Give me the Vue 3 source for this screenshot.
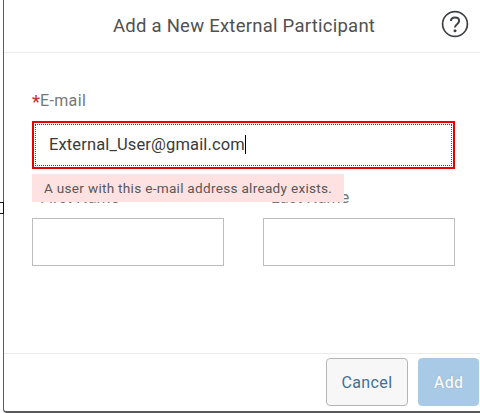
<script setup>
import { ref } from 'vue'

const email = ref('External_User@gmail.com')
const names = ['First Name', 'Last Name']
</script>

<template>
  <main class="page">
    <span class="handle"></span>
    <section class="dialog">
      <header class="header">
        <h1 class="title">Add a New External Participant</h1>
        <svg class="help" viewBox="0 0 28 28" fill="none" stroke="#3f4245">
          <circle cx="14" cy="14" r="12.4" stroke-width="1.7" />
          <path d="M9.9 11C10 8.7 11.5 7.4 14 7.4c2.5 0 4.1 1.3 4.1 3.4 0 1.7-1 2.5-2.1 3.4-1.3 1-2 1.6-2 3.3" stroke-width="2" />
          <circle cx="14" cy="20.8" r="1.5" fill="#3f4245" stroke="none" />
        </svg>
      </header>
      <div class="body">
        <label class="label"><span class="star">*</span><span class="email-label">E-mail</span></label>
        <div class="input invalid">
          <div class="focus"><span class="value">{{ email }}</span><i class="caret"></i></div>
        </div>
        <div class="names">
          <div v-for="name in names" :key="name" class="field">
            <label class="name-label"><span>{{ name }}</span></label>
            <div class="input"></div>
          </div>
          <div class="message"><span>A user with this e-mail address already exists.</span></div>
        </div>
      </div>
      <footer class="footer">
        <button class="button cancel"><span>Cancel</span></button>
        <button class="button add"><span>Add</span></button>
      </footer>
    </section>
  </main>
</template>

<style>
body {
  margin: 0;
  overflow: hidden;
}
</style>

<style scoped>
* {
  box-sizing: border-box;
}
.page {
  position: relative;
  width: 480px;
  height: 413px;
  padding-left: 3px;
  background: #fff;
  font-family: Roboto, "Liberation Sans", sans-serif;
  font-size: 16px;
  white-space: nowrap;
}
.handle {
  position: absolute;
  left: -4px;
  top: 202px;
  width: 8px;
  height: 12px;
  border: 1px solid #111;
  background: #fff;
  z-index: 1;
}
.dialog {
  display: flex;
  flex-direction: column;
  height: 413px;
  border-left: 1px solid #5c5c5f;
  border-bottom: 2px solid #59595b;
  border-bottom-left-radius: 4px;
}
.header {
  display: flex;
  align-items: center;
  height: 53px;
  padding: 0 11px 0 109px;
  border-bottom: 1px solid #ebebeb;
}
.title {
  flex: 1;
  margin: 0;
  font-size: 18.5px;
  font-weight: 400;
  line-height: 52px;
  letter-spacing: 0.25px;
  color: #505050;
}
.help {
  width: 28px;
  height: 28px;
  margin-top: -4px;
}
.body {
  flex: 1;
  padding: 38px 25px 0 28px;
}
.label {
  display: flex;
  height: 30px;
  line-height: 20px;
  letter-spacing: 0.35px;
  color: #777;
}
.star {
  width: 8px;
  font-size: 18px;
  line-height: 22px;
  font-weight: 500;
  color: #c3353b;
}
.input {
  height: 48px;
  border: 1px solid #bdbdbd;
  background: #fff;
}
.invalid {
  height: 48px;
  padding: 1px;
  border: 2px solid #e80000;
}
.focus {
  display: flex;
  align-items: center;
  height: 42px;
  padding: 0 0 1px 13px;
  border: 1px dotted #444;
}
.value {
  font-size: 16.5px;
  letter-spacing: 0.13px;
  color: #3a3a3a;
}
.caret {
  width: 1px;
  height: 19px;
  background: #000;
}
.names {
  position: relative;
  display: grid;
  grid-template-columns: 192px 192px;
  justify-content: space-between;
  padding-top: 19px;
}
.name-label {
  display: block;
  height: 30px;
  padding-left: 8px;
  line-height: 20px;
  letter-spacing: 0.1px;
  color: #777;
}
.message {
  position: absolute;
  left: 0;
  top: 5px;
  width: 312px;
  height: 28px;
  padding-left: 12px;
  background: #fee2e1;
  color: #585858;
  font-size: 13.6px;
  line-height: 28px;
  letter-spacing: 0.28px;
}
.footer {
  display: flex;
  justify-content: flex-end;
  gap: 10px;
  height: 58px;
  padding: 4px 1px 0 0;
  border-top: 1px solid #ebebeb;
}
.button {
  height: 48px;
  padding: 0;
  border: 1px solid #b5b5b5;
  border-radius: 4px;
  font: inherit;
}
.cancel {
  width: 82px;
  background: #f7f7f7;
  color: #426f94;
  letter-spacing: 0.4px;
}
.add {
  width: 61px;
  border-color: #a9cae6;
  background: #a9cae6;
  color: #f8fbff;
  font-weight: 500;
  letter-spacing: 0.3px;
  text-shadow: 0 0 1px #718b9f;
}
</style>
